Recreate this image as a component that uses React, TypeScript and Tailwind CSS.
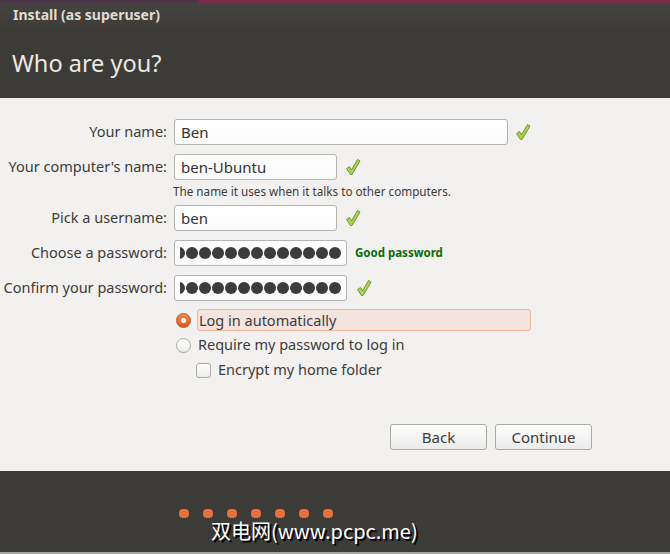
import React from "react";

const font = { fontFamily: '"Noto Sans", "DejaVu Sans", sans-serif' };

function Check() {
  return (
    <svg width="16" height="18" viewBox="0 0 16 18" className="shrink-0">
      <path
        d="M1.5 10.5 L4.5 8.5 L6.5 12 L12.5 1.5 L15 3 L7 16.5 L5.5 16.5 Z"
        fill="#a8d35a"
        stroke="#6f9a2a"
        strokeWidth="1"
        strokeLinejoin="round"
      />
    </svg>
  );
}

function Dots({ n }: { n: number }) {
  return (
    <div className="ml-[5px] mr-[5px] flex h-full items-center justify-end gap-[1px] overflow-hidden">
      {Array.from({ length: n }).map((_, i) => (
        <span key={i} className="h-[12px] w-[12px] shrink-0 rounded-full bg-[#3c3c3c]" />
      ))}
    </div>
  );
}

function Label({ children }: { children: React.ReactNode }) {
  return <div className="w-[167px] shrink-0 text-right text-[14.5px] text-[#3c3c3c]">{children}</div>;
}

const input =
  "ml-[7px] h-[26px] rounded-[3px] border border-[#b4b4b0] bg-gradient-to-b from-white to-[#fafafa] px-[6px] text-[15px] leading-[24px] text-[#333]";

export default function App() {
  return (
    <div className="flex h-[554px] w-[670px] flex-col bg-[#3c3b37]" style={font}>
      {/* top strip */}
      <div className="flex h-[3px]">
        <div className="w-[199px] bg-[#4c3748]" />
        <div className="flex-1 bg-[#7e2a4a]" />
      </div>
      <div className="h-[27px] bg-gradient-to-b from-[#454440] to-[#3d3c38] pl-[13px] text-[14px] font-bold leading-[24px] text-[#dfdbd2]">
        Install (as superuser)
      </div>
      <div className="h-[68px] pl-[12px] pt-[18px] text-[23.5px] leading-[30px] text-[#ece9e2]">Who are you?</div>

      {/* form */}
      <div className="flex h-[373px] flex-col bg-[#f2f1f0] pt-[21px]">
        <div className="flex h-[26px] items-center">
          <Label>Your name:</Label>
          <div className={`${input} w-[334px]`}>Ben</div>
          <div className="ml-[7px]">
            <Check />
          </div>
        </div>

        <div className="mt-[9px] flex h-[26px] items-center">
          <Label>Your computer's name:</Label>
          <div className={`${input} w-[163px]`}>ben-Ubuntu</div>
          <div className="ml-[8px]">
            <Check />
          </div>
        </div>
        <div className="ml-[173px] mt-[3px] h-[16px] text-[11.7px] leading-[16px] text-[#3c3c3c]">
          The name it uses when it talks to other computers.
        </div>

        <div className="mt-[6px] flex h-[26px] items-center">
          <Label>Pick a username:</Label>
          <div className={`${input} w-[163px]`}>ben</div>
          <div className="ml-[8px]">
            <Check />
          </div>
        </div>

        <div className="mt-[9px] flex h-[26px] items-center">
          <Label>Choose a password:</Label>
          <div className="ml-[7px] h-[26px] w-[173px] rounded-[3px] border border-[#b4b4b0] bg-gradient-to-b from-white to-[#fafafa]">
            <Dots n={14} />
          </div>
          <div className="ml-[8px] text-[11.5px] font-bold text-[#0b6b0b]">Good password</div>
        </div>

        <div className="mt-[9px] flex h-[26px] items-center">
          <Label>Confirm your password:</Label>
          <div className="ml-[7px] h-[26px] w-[173px] rounded-[3px] border border-[#b4b4b0] bg-gradient-to-b from-white to-[#fafafa]">
            <Dots n={14} />
          </div>
          <div className="ml-[9px]">
            <Check />
          </div>
        </div>

        {/* login options */}
        <div className="ml-[176px] mt-[8px] flex h-[22px] items-center">
          <span className="flex h-[15px] w-[15px] shrink-0 items-center justify-center rounded-full border border-[#c4561f] bg-gradient-to-b from-[#f08a55] to-[#d9581c]">
            <span className="h-[5px] w-[5px] rounded-full bg-white" />
          </span>
          <div className="ml-[6px] h-[22px] w-[334px] rounded-[3px] border border-[#f0b49a] bg-[#f4e4df] pl-[1px] text-[14.5px] leading-[20px] text-[#3c3c3c]">
            Log in automatically
          </div>
        </div>
        <div className="ml-[176px] mt-[4px] flex h-[20px] items-center">
          <span className="h-[15px] w-[15px] shrink-0 rounded-full border border-[#a8a8a4] bg-gradient-to-b from-white to-[#ececea]" />
          <span className="ml-[7px] text-[14.5px] text-[#3c3c3c]">Require my password to log in</span>
        </div>
        <div className="ml-[196px] mt-[5px] flex h-[20px] items-center">
          <span className="h-[15px] w-[15px] shrink-0 rounded-[3px] border border-[#a8a8a4] bg-gradient-to-b from-white to-[#ececea]" />
          <span className="ml-[7px] text-[14.5px] text-[#3c3c3c]">Encrypt my home folder</span>
        </div>

        {/* buttons */}
        <div className="ml-[390px] mt-[44px] flex gap-[8px]">
          <button className="h-[26px] w-[97px] rounded-[3px] border border-[#a9a9a5] bg-gradient-to-b from-[#fdfdfd] to-[#ebebea] text-[15px] leading-[22px] text-[#3c3c3c]">
            Back
          </button>
          <button className="h-[26px] w-[97px] rounded-[3px] border border-[#a9a9a5] bg-gradient-to-b from-[#fdfdfd] to-[#ebebea] text-[15px] leading-[22px] text-[#3c3c3c]">
            Continue
          </button>
        </div>
      </div>

      {/* footer */}
      <div className="flex flex-1 flex-col bg-[#3c3b37] pt-[38px]">
        <div className="ml-[179px] flex gap-[14px]">
          {Array.from({ length: 7 }).map((_, i) => (
            <span key={i} className="h-[9px] w-[10px] rounded-[4px] bg-[#e8703c]" />
          ))}
        </div>
        <div
          className="ml-[211px] mt-[1px] text-[20px] leading-[24px] text-white [text-shadow:2px_2px_0_#000]"
          style={{ fontFamily: '"Noto Sans CJK SC", "DejaVu Sans", sans-serif' }}
        >
          双电网(www.pcpc.me)
        </div>
      </div>
      <div className="h-[2px] bg-[#a5a5a3]" />
    </div>
  );
}
